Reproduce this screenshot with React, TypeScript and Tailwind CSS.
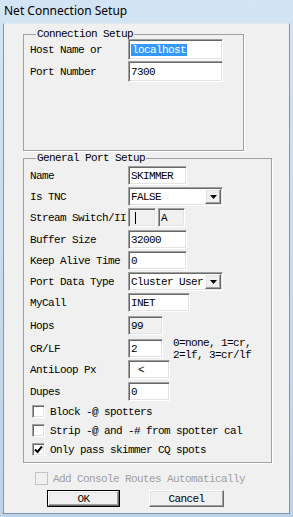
import React from 'react';

const sunken =
  'border border-[#a0a0a0] border-r-white border-b-white shadow-[inset_1px_1px_0_#696969,inset_-1px_-1px_0_#e3e3e3]';
const raised =
  'border border-white border-r-[#696969] border-b-[#696969] shadow-[inset_-1px_-1px_0_#a0a0a0,inset_1px_1px_0_#e3e3e3] bg-[#f0f0f0]';

function Field({ width, value, gray, selected }: { width: string; value?: string; gray?: boolean; selected?: boolean }) {
  return (
    <div className={`${width} h-full ${sunken} ${gray ? 'bg-[#f0f0f0]' : 'bg-white'} flex items-center pl-[2px] overflow-hidden`}>
      {selected ? <span className="bg-[#3399ff] text-white px-[1px]">{value}</span> : <span>{value}</span>}
    </div>
  );
}

function Select({ value }: { value: string }) {
  return (
    <div className={`w-[95px] h-full ${sunken} bg-white flex items-center justify-between pl-[2px] pr-[1px]`}>
      <span>{value}</span>
      <div className={`w-[16px] h-[15px] ${raised} flex items-center justify-center`}>
        <svg width="7" height="4" viewBox="0 0 7 4">
          <polygon points="0,0 7,0 3.5,4" fill="#000" />
        </svg>
      </div>
    </div>
  );
}

function Row({ label, mt, children }: { label: string; mt: string; children: React.ReactNode }) {
  return (
    <div className={`flex items-center h-[19px] ${mt}`}>
      <div className="w-[98px] shrink-0">{label}</div>
      {children}
    </div>
  );
}

function Check({ label, checked, disabled, mt }: { label: string; checked?: boolean; disabled?: boolean; mt: string }) {
  return (
    <div className={`flex items-center h-[13px] ${mt}`}>
      <div
        className={`w-[13px] h-[13px] shrink-0 flex items-center justify-center ${
          disabled ? 'border border-[#c5c5c5] bg-[#f0f0f0]' : `${sunken} bg-white`
        }`}
      >
        {checked && (
          <svg width="9" height="9" viewBox="0 0 9 9">
            <path d="M1 4.5 L3.5 7 L8 1.5" stroke="#000" strokeWidth="2" fill="none" />
          </svg>
        )}
      </div>
      <span className={`ml-[5px] whitespace-nowrap ${disabled ? 'text-[#a0a0a0]' : ''}`}>{label}</span>
    </div>
  );
}

export default function App() {
  return (
    <div className="w-[293px] h-[517px] bg-gradient-to-b from-[#d3e4f4] to-[#bcd3ea] flex flex-col overflow-hidden">
      {/* Title bar */}
      <div className="h-[23px] shrink-0 flex items-center pl-[4px] pb-[2px] font-['Noto_Sans',sans-serif] text-[12px] text-black">
        Net Connection Setup
      </div>

      {/* Client */}
      <div className="flex-1 mx-[3px] mb-[3px] bg-[#f0f0f0] border border-[#8296ab] border-t-[#dfe8f1] font-['Liberation_Mono',monospace] text-[11px] leading-[12px] tracking-[-0.6px] text-black flex flex-col">
        <fieldset className="ml-[19px] mt-[4px] w-[221px] h-[123px] border border-[#a0a0a0] pl-[6px] shadow-[1px_1px_0_#fff]">
          <legend className="ml-[6px] px-[1px] leading-[12px]">Connection Setup</legend>
          <div className="flex items-center h-[21px] -mt-[1px]">
            <div className="w-[98px] shrink-0">Host Name or</div>
            <Field width="w-[95px]" value="localhost" selected />
          </div>
          <div className="flex items-center h-[21px] mt-[1px]">
            <div className="w-[98px] shrink-0">Port Number</div>
            <Field width="w-[95px]" value="7300" />
          </div>
        </fieldset>

        <fieldset className="ml-[19px] mt-[1px] w-[249px] h-[311px] border border-[#a0a0a0] pl-[6px] shadow-[1px_1px_0_#fff]">
          <legend className="ml-[6px] px-[1px] leading-[12px]">General Port Setup</legend>
          <Row label="Name" mt="mt-[2px]">
            <Field width="w-[59px]" value="SKIMMER" />
          </Row>
          <Row label="Is TNC" mt="mt-[2px]">
            <Select value="FALSE" />
          </Row>
          <Row label="Stream Switch/II" mt="mt-[2px]">
            <div className={`w-[28px] h-full ${sunken} bg-[#f0f0f0] flex items-center pl-[6px]`}>
              <div className="w-[1px] h-[12px] bg-black" />
            </div>
            <div className={`ml-[2px] w-[27px] h-full ${sunken} bg-[#f0f0f0] flex items-center pl-[2px]`}>A</div>
          </Row>
          <Row label="Buffer Size" mt="mt-[3px]">
            <Field width="w-[59px]" value="32000" />
          </Row>
          <Row label="Keep Alive Time" mt="mt-[2px]">
            <Field width="w-[59px]" value="0" />
          </Row>
          <Row label="Port Data Type" mt="mt-[2px]">
            <Select value="Cluster User" />
          </Row>
          <Row label="MyCall" mt="mt-[2px]">
            <Field width="w-[62px]" value="INET" />
          </Row>
          <Row label="Hops" mt="mt-[4px]">
            <Field width="w-[35px]" value="99" gray />
          </Row>
          <Row label="CR/LF" mt="mt-[4px]">
            <Field width="w-[35px]" value="2" />
            <div className="ml-[10px] leading-[12px] whitespace-nowrap">
              <div>0=none, 1=cr,</div>
              <div>2=lf, 3=cr/lf</div>
            </div>
          </Row>
          <Row label="AntiLoop Px" mt="mt-[2px]">
            <div className={`w-[42px] h-full ${sunken} bg-white flex items-center pl-[9px]`}>&lt;</div>
          </Row>
          <Row label="Dupes" mt="mt-[3px]">
            <Field width="w-[42px]" value="0" />
          </Row>
          <div className="ml-[2px]">
            <Check label="Block -@ spotters" mt="mt-[4px]" />
            <Check label="Strip -@ and -# from spotter cal" mt="mt-[6px]" />
            <Check label="Only pass skimmer CQ spots" checked mt="mt-[6px]" />
          </div>
        </fieldset>

        <div className="ml-[31px]">
          <Check label="Add Console Routes Automatically" disabled mt="mt-[9px]" />
        </div>

        <div className="flex mt-[5px] h-[17px]">
          <div className="ml-[43px] w-[73px] h-full border border-black">
            <div className={`w-full h-full ${raised} flex items-center justify-center`}>OK</div>
          </div>
          <div className={`ml-[29px] w-[75px] h-full ${raised} flex items-center justify-center`}>Cancel</div>
        </div>
      </div>
    </div>
  );
}
